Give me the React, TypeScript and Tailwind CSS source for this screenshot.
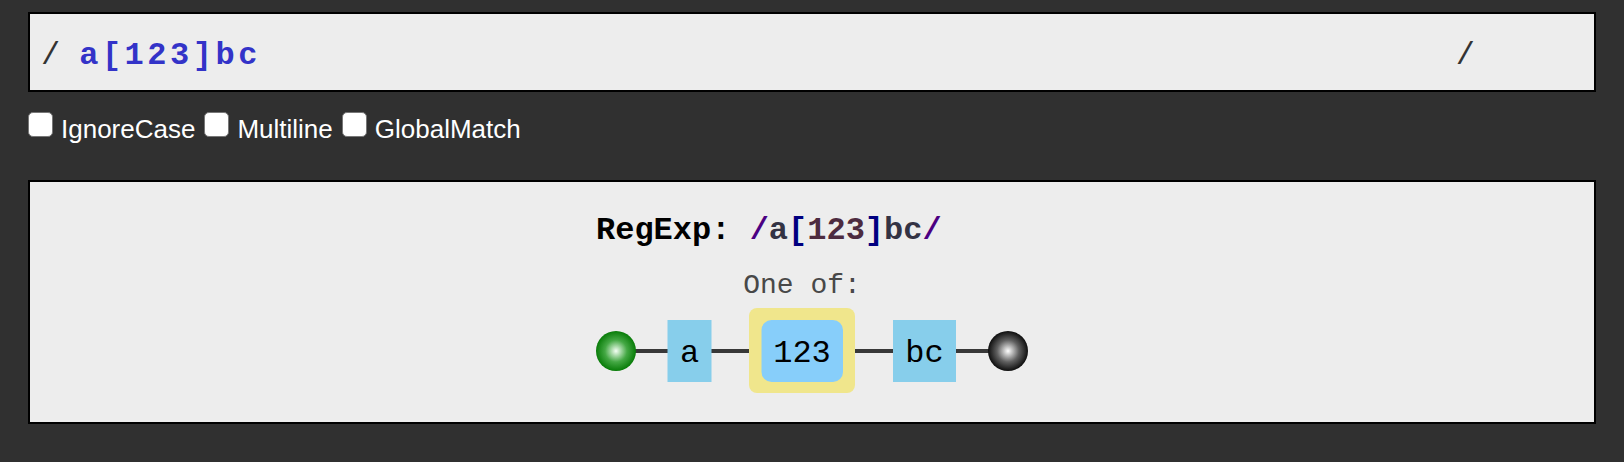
const mono = "font-['Liberation_Mono','Courier_New',monospace]";

function Check({ label }: { label: string }) {
  return (
    <label className="flex items-start">
      <input
        type="checkbox"
        className="h-[25px] w-[25px] appearance-none rounded-[5px] border-[1.5px] border-[#777] bg-white"
      />
      <span className="ml-[8px] mt-[4px] text-[26px] leading-[26px] text-white">{label}</span>
    </label>
  );
}

function Diagram() {
  return (
    <svg width="432" height="130" viewBox="0 0 432 130" className="mt-[16px] block">
      <defs>
        <radialGradient id="startGrad" cx="50%" cy="50%" r="50%">
          <stop offset="0%" stopColor="#f4fff4" />
          <stop offset="55%" stopColor="#44a844" />
          <stop offset="100%" stopColor="#087c08" />
        </radialGradient>
        <radialGradient id="endGrad" cx="50%" cy="50%" r="50%">
          <stop offset="0%" stopColor="#ffffff" />
          <stop offset="55%" stopColor="#606060" />
          <stop offset="100%" stopColor="#0e0e0e" />
        </radialGradient>
      </defs>

      <text
        x="206"
        y="28"
        textAnchor="middle"
        fontFamily="'Liberation Mono', monospace"
        fontSize="28"
        fill="#484848"
      >
        One of:
      </text>

      <line x1="20" y1="86" x2="412" y2="86" stroke="#383838" strokeWidth="4" />

      <circle cx="20" cy="86" r="20" fill="url(#startGrad)" />

      <rect x="71.5" y="55" width="44" height="62" fill="#87ceeb" />
      <text x="93.5" y="97" textAnchor="middle" fontFamily="'Liberation Mono', monospace" fontSize="32" fill="#000">
        a
      </text>

      <rect x="153" y="43" width="106" height="85" rx="8" fill="#f0e68c" />
      <rect x="165.5" y="55" width="81.5" height="62" rx="10" fill="#87cefa" />
      <text x="206" y="97" textAnchor="middle" fontFamily="'Liberation Mono', monospace" fontSize="32" fill="#000">
        123
      </text>

      <rect x="297" y="55" width="63" height="62" fill="#87ceeb" />
      <text x="328.5" y="97" textAnchor="middle" fontFamily="'Liberation Mono', monospace" fontSize="32" fill="#000">
        bc
      </text>

      <circle cx="412" cy="86" r="20" fill="url(#endGrad)" />
    </svg>
  );
}

export default function App() {
  return (
    <div className="min-h-screen bg-[#303030] px-[28px] pt-[12px] font-['Liberation_Sans',Arial,sans-serif]">
      <div className={`flex h-[80px] items-center border-2 border-black bg-[#ededed] pl-[11px] pr-[119px] pt-[8px] text-[32px] leading-[36px] ${mono}`}>
        <span className="text-[#333]">/</span>
        <span className="ml-[19px] flex-1 font-bold tracking-[3.5px] text-[#3333c8]">a[123]bc</span>
        <span className="text-[#333]">/</span>
      </div>

      <div className="mt-[20px] flex h-[30px] items-start gap-[9px]">
        <Check label="IgnoreCase" />
        <Check label="Multiline" />
        <Check label="GlobalMatch" />
      </div>

      <div className="mt-[38px] flex h-[244px] justify-center border-2 border-black bg-[#ededed]">
        <div className="w-[432px] pt-[31px]">
          <div className={`text-[32px] font-bold leading-[36px] ${mono}`}>
            <span className="text-black">RegExp: </span>
            <span className="text-[#4b0082]">/</span>
            <span className="text-[#333344]">a</span>
            <span className="text-[#000080]">[</span>
            <span className="text-[#4d2b40]">123</span>
            <span className="text-[#000080]">]</span>
            <span className="text-[#333344]">bc</span>
            <span className="text-[#4b0082]">/</span>
          </div>
          <Diagram />
        </div>
      </div>
    </div>
  );
}
